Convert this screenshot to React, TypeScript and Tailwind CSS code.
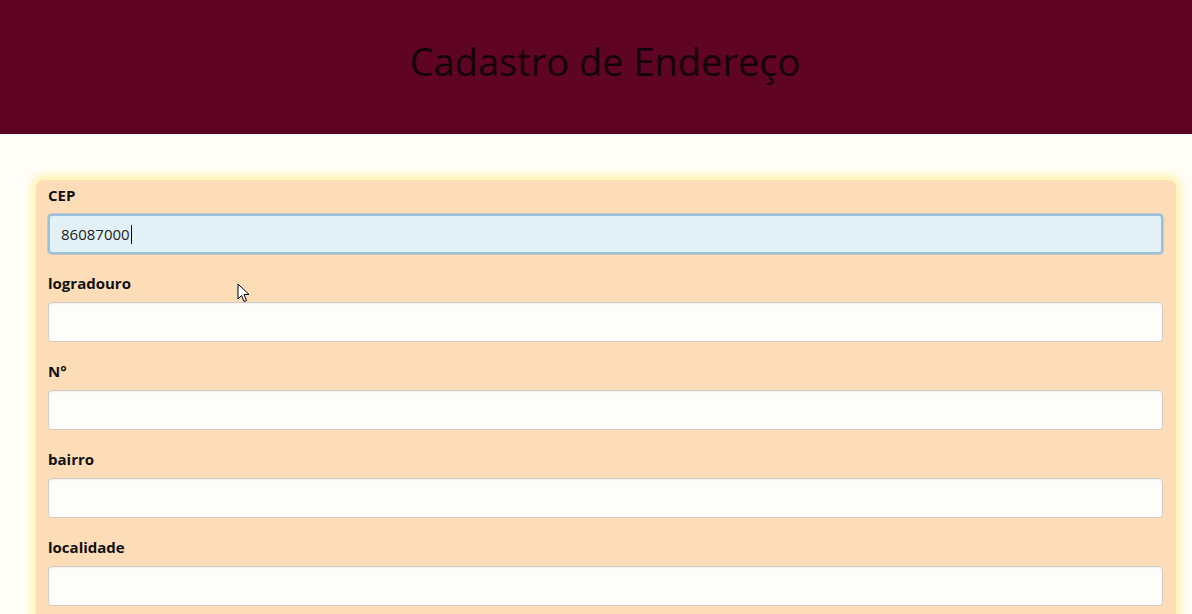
import React from "react";

const font = { fontFamily: '"Open Sans", "Noto Sans", "DejaVu Sans", sans-serif' };

function Field({ label, children }: { label: string; children?: React.ReactNode }) {
  return (
    <div className="flex flex-col">
      <label className="h-[22px] leading-[22px] text-[15px] font-bold text-[#111]">{label}</label>
      <div className="mt-[8px] mb-[18px]">
        {children ?? (
          <input
            readOnly
            className="block w-full h-[40px] rounded-[4px] border border-[#d2ccc4] bg-[#fdfdfa] shadow-[inset_0_1px_2px_rgba(0,0,0,0.06)] outline-none"
          />
        )}
      </div>
    </div>
  );
}

export default function App() {
  return (
    <div className="min-h-screen bg-[#fffdf7] relative" style={font}>
      <header className="h-[134px] bg-[#5f0422] flex items-center justify-center">
        <h1 className="text-[38px] font-medium text-[#14030a] ml-[18px] -mt-[12px]">Cadastro de Endereço</h1>
      </header>
      <main className="pt-[46px] pl-[36px] pr-[16px]">
        <div className="rounded-[8px] bg-[#fddcb8] pt-[4px] pl-[12px] pr-[13px] pb-[40px] shadow-[0_0_10px_4px_rgba(255,236,130,0.7)]">
          <Field label="CEP">
            <div className="flex items-center w-full h-[40px] rounded-[4px] border-2 border-[#9ac0dc] bg-[#e1f1f5] pl-[11px] text-[15px] text-[#222] shadow-[0_0_0_1px_rgba(140,180,220,0.5)]">
              <span>86087000</span>
              <span className="inline-block w-[1px] h-[19px] bg-black ml-[1px]" />
            </div>
          </Field>
          <Field label="logradouro" />
          <Field label="N°" />
          <Field label="bairro" />
          <Field label="localidade" />
        </div>
      </main>
      <svg className="absolute left-[237px] top-[283px]" width="13" height="20" viewBox="0 0 13 20">
        <path d="M1 1 L1 16 L4.5 12.5 L7 18.5 L9.5 17.5 L7 11.5 L12 11.5 Z" fill="#fff" stroke="#000" strokeWidth="1" strokeLinejoin="round" />
      </svg>
    </div>
  );
}
